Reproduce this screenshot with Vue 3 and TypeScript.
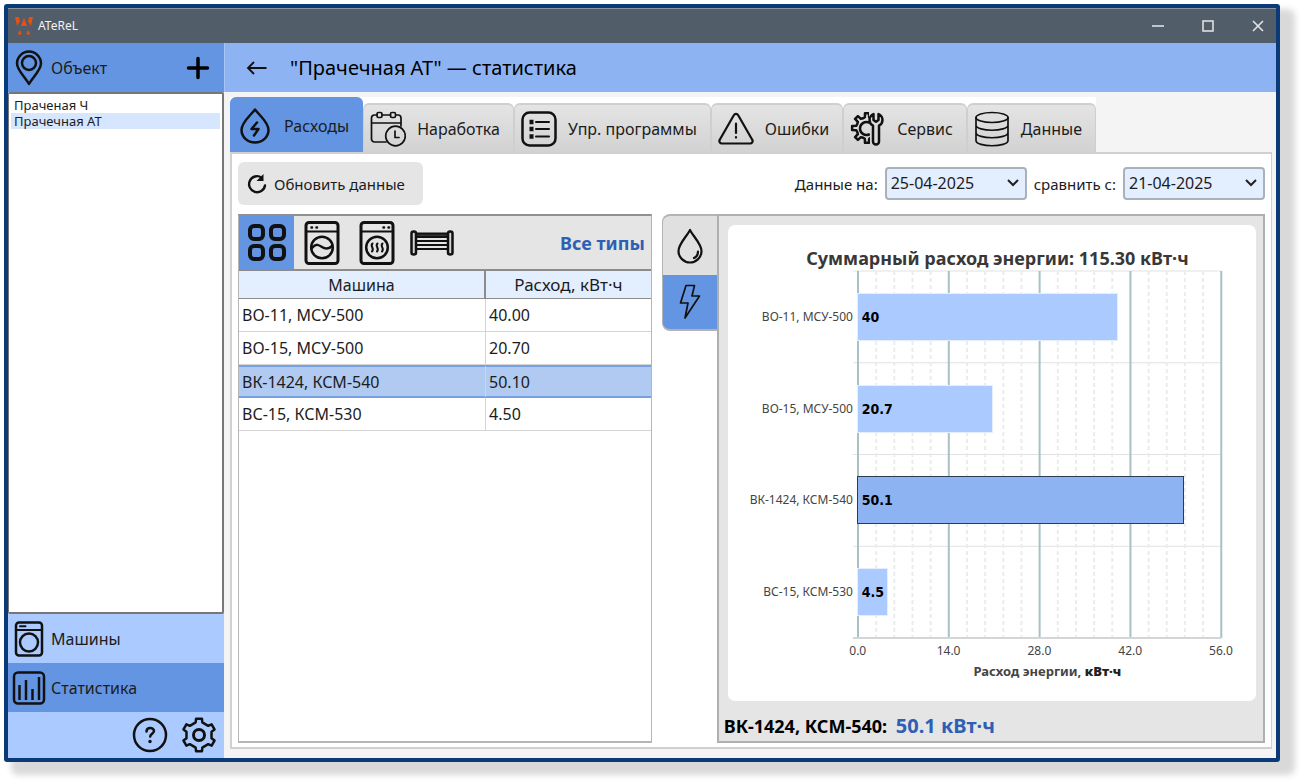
<script setup lang="ts">
import { computed, ref } from 'vue'

interface Machine {
  name: string
  value: number
}

const objects = ['Праченая Ч', 'Прачечная АТ']
const activeObject = ref(1)

const tabs = [
  { id: 'costs', label: 'Расходы' },
  { id: 'hours', label: 'Наработка' },
  { id: 'programs', label: 'Упр. программы' },
  { id: 'errors', label: 'Ошибки' },
  { id: 'service', label: 'Сервис' },
  { id: 'data', label: 'Данные' },
]
const activeTab = ref('costs')
const activeType = ref('all')
const activeResource = ref('energy')
const dateTo = ref('25-04-2025')
const dateFrom = ref('21-04-2025')

const machines: Machine[] = [
  { name: 'ВО-11, МСУ-500', value: 40 },
  { name: 'ВО-15, МСУ-500', value: 20.7 },
  { name: 'ВК-1424, КСМ-540', value: 50.1 },
  { name: 'ВС-15, КСМ-530', value: 4.5 },
]
const selected = ref(2)
const current = computed(() => machines[selected.value])
const total = computed(() => machines.reduce((sum, m) => sum + m.value, 0).toFixed(2))

const axisMax = 56
const majors = [0, 14, 28, 42, 56]
const minors = Array.from({ length: 20 }, (_, i) => i).filter((i) => i % 5 !== 0).map((i) => i * 5)
const rows = [0, 25, 50, 75]

function gearPath(teeth: number, cx: number, cy: number, outer: number, inner: number): string {
  const step = (Math.PI * 2) / teeth
  const points: string[] = []
  const add = (angle: number, r: number) =>
    points.push(`${(cx + r * Math.sin(angle)).toFixed(2)} ${(cy - r * Math.cos(angle)).toFixed(2)}`)
  for (let i = 0; i < teeth; i++) {
    const a = i * step
    add(a - step * 0.17, outer)
    add(a + step * 0.17, outer)
    add(a + step * 0.25, inner)
    add(a + step * 0.5, inner - 0.5)
    add(a + step * 0.75, inner)
  }
  return `M${points.join('L')}Z`
}
const settingsGear = gearPath(6, 18, 18, 16.5, 13)
const serviceGear = gearPath(8, 17, 17, 15, 11)
</script>

<template>
  <div class="page">
    <div class="window">
      <header class="titlebar">
        <svg class="logo" width="20" height="20" viewBox="0 0 20 20" fill="#e8500f">
          <path d="M1 1h4l1 4-3 5zM19 1h-4l-1 4 3 5zM10 1.500l3 8.500H7zM3.500 18.500L6 14l2 4.500zM16.500 18.500L14 14l-2 4.500z" />
        </svg>
        <span class="app-name">ATeReL</span>
        <div class="win-controls">
          <button type="button" aria-label="Свернуть"><svg width="14" height="14"><path d="M1 7h12" /></svg></button>
          <button type="button" aria-label="Развернуть"><svg width="14" height="14"><rect x="2" y="2" width="10" height="10" /></svg></button>
          <button type="button" aria-label="Закрыть"><svg width="14" height="14"><path d="M2 2l10 10M12 2L2 12" /></svg></button>
        </div>
      </header>

      <div class="body">
        <aside class="sidebar">
          <div class="side-head">
            <svg width="30" height="36" viewBox="0 0 30 36" class="ico">
              <path d="M15 34C11 27 3 20 3 13.500a12 12 0 0 1 24 0C27 20 19 27 15 34z" />
              <circle cx="15" cy="13" r="7" />
            </svg>
            <span>Объект</span>
            <button type="button" class="plus" aria-label="Добавить объект">
              <svg width="24" height="24" viewBox="0 0 24 24"><path d="M12 2.500v19M2.500 12h19" stroke="#000" stroke-width="3.500" stroke-linecap="round" /></svg>
            </button>
          </div>
          <ul class="objects">
            <li v-for="(o, i) in objects" :key="o">
              <button type="button" :class="{ on: i === activeObject }" @click="activeObject = i">{{ o }}</button>
            </li>
          </ul>
          <button type="button" class="side-link">
            <svg width="34" height="36" viewBox="0 0 34 36" class="ico">
              <rect x="4" y="1.500" width="26" height="33" rx="3" />
              <path d="M4 9h26" stroke-width="2" />
              <path d="M8 5.300h2M11.500 5.300h2" stroke-width="2" />
              <circle cx="17" cy="21.500" r="9" />
            </svg>
            <span>Машины</span>
          </button>
          <button type="button" class="side-link on">
            <svg width="34" height="36" viewBox="0 0 34 36" class="ico">
              <rect x="2" y="2.500" width="30" height="31" rx="4" />
              <path d="M7.500 15v15M14 10v20M20.500 19v11M27 7v23" stroke-width="2.500" stroke-linecap="butt" />
            </svg>
            <span>Статистика</span>
          </button>
          <div class="side-foot">
            <button type="button" aria-label="Справка">
              <svg width="36" height="36" viewBox="0 0 36 36" class="ico">
                <circle cx="18" cy="18" r="16" />
                <path d="M14.500 14.500c0-5 7.500-4.500 7.500-.5 0 2.500-3.800 3-3.800 5.500" stroke-width="2.500" />
                <circle cx="18" cy="24.500" r="1" fill="#111" stroke-width="1.500" />
              </svg>
            </button>
            <button type="button" aria-label="Настройки">
              <svg width="36" height="36" viewBox="0 0 36 36" class="ico">
                <path :d="settingsGear" />
                <circle cx="18" cy="18" r="5.500" stroke-width="3" />
              </svg>
            </button>
          </div>
        </aside>

        <main class="main">
          <div class="main-head">
            <button type="button" aria-label="Назад">
              <svg width="22" height="18" viewBox="0 0 22 18"><path d="M20.500 9H2M8 3L2 9l6 6" fill="none" stroke="#111" stroke-width="1.800" /></svg>
            </button>
            <h1>"Прачечная АТ" — статистика</h1>
          </div>

          <div class="content">
            <nav class="tabs" role="tablist">
              <button
                v-for="t in tabs"
                :key="t.id"
                type="button"
                role="tab"
                :aria-selected="t.id === activeTab"
                :class="['tab', { on: t.id === activeTab }]"
                @click="activeTab = t.id"
              >
                <svg v-if="t.id === 'costs'" width="36" height="36" viewBox="0 0 36 36" class="ico">
                  <path d="M18 1.500C14 7 4.500 14 4.500 22a13.500 12.500 0 0 0 27 0C31.500 14 22 7 18 1.500z" />
                  <path d="M20 14.500L14.500 21h7L17 27.500" />
                </svg>
                <svg v-else-if="t.id === 'hours'" width="36" height="36" viewBox="0 0 36 36" class="ico thin">
                  <path d="M16 31H4.500a3 3 0 0 1-3-3V7a3 3 0 0 1 3-3H7M12 4h8.500M26 4h2a3 3 0 0 1 3 3v8M1.500 12H31" />
                  <rect x="7" y="1.500" width="5" height="5" rx="1.500" />
                  <rect x="20.500" y="1.500" width="5" height="5" rx="1.500" />
                  <circle cx="25.500" cy="25" r="9.800" />
                  <path d="M25 20v6.500H29" />
                </svg>
                <svg v-else-if="t.id === 'programs'" width="36" height="36" viewBox="0 0 36 36" class="ico">
                  <rect x="1.500" y="1.500" width="33" height="33" rx="7" />
                  <path d="M15 11h13M15 18h13M15 25.500h13" stroke-width="2" />
                  <path d="M8.500 11h4M8.500 18h4M8.500 25.500h4" stroke-width="4.500" stroke-linecap="butt" />
                </svg>
                <svg v-else-if="t.id === 'errors'" width="36" height="36" viewBox="0 0 36 36" class="ico mid">
                  <path d="M15.800 4.200L1.900 28.500a2.500 2.500 0 0 0 2.200 4h27.800a2.500 2.500 0 0 0 2.200-4L20.200 4.200a2.500 2.500 0 0 0-4.400 0z" />
                  <path d="M18 12.500v9.500M18 26v.6" />
                </svg>
                <svg v-else-if="t.id === 'service'" width="36" height="36" viewBox="0 0 36 36" class="ico">
                  <clipPath id="half-gear"><path d="M0 0h19v12l1 3v19H0z" /></clipPath>
                  <g clip-path="url(#half-gear)">
                    <path :d="serviceGear" />
                    <path d="M19 11.500a6.500 6.500 0 1 0 0 12" />
                  </g>
                  <path d="M23.500 3c-3 1.500-4 3.500-4 6s1.300 4.500 3.500 5.700V30.500a3 3 0 0 0 6 0V14.700C31.200 13.500 32.500 11.500 32.500 9s-1-4.500-4-6v6L26 10.800 23.500 9z" fill="#dcdcdc" />
                </svg>
                <svg v-else width="36" height="36" viewBox="0 0 36 36" class="ico thin">
                  <ellipse cx="18" cy="6.500" rx="16" ry="5" />
                  <path d="M2 6.500v23c0 7 32 7 32 0v-23M2 14c0 7 32 7 32 0M2 21.500c0 7 32 7 32 0" />
                </svg>
                <span>{{ t.label }}</span>
              </button>
            </nav>

            <section class="pane">
              <div class="toolbar">
                <button type="button" class="refresh">
                  <svg width="22" height="22" viewBox="0 0 22 22">
                    <path d="M15.500 4.500A8 8 0 1 0 19 12.500" fill="none" stroke="#111" stroke-width="2.400" stroke-linecap="round" />
                    <path d="M17.500 1v7H10.500z" fill="#111" />
                  </svg>
                  <span>Обновить данные</span>
                </button>
                <div class="dates">
                  <label for="date-to">Данные на:</label>
                  <div class="pick">
                    <select id="date-to" v-model="dateTo"><option>25-04-2025</option><option>24-04-2025</option></select>
                    <svg width="14" height="10" viewBox="0 0 14 10"><path d="M2 2l5 5 5-5" /></svg>
                  </div>
                  <label for="date-from">сравнить с:</label>
                  <div class="pick">
                    <select id="date-from" v-model="dateFrom"><option>21-04-2025</option><option>20-04-2025</option></select>
                    <svg width="14" height="10" viewBox="0 0 14 10"><path d="M2 2l5 5 5-5" /></svg>
                  </div>
                </div>
              </div>

              <div class="split">
                <div class="left">
                  <div class="types">
                    <button type="button" aria-label="Все типы" :class="{ on: activeType === 'all' }" @click="activeType = 'all'">
                      <svg width="38" height="38" viewBox="0 0 38 38" class="ico">
                        <g stroke-width="4">
                          <rect x="2" y="2" width="13" height="13" rx="4" /><rect x="23" y="2" width="13" height="13" rx="4" />
                          <rect x="2" y="22" width="13" height="13" rx="4" /><rect x="23" y="22" width="13" height="13" rx="4" />
                        </g>
                      </svg>
                    </button>
                    <button type="button" aria-label="Стиральные" :class="{ on: activeType === 'wash' }" @click="activeType = 'wash'">
                      <svg width="36" height="44" viewBox="0 0 36 44" class="ico">
                        <rect x="2" y="1.500" width="32" height="41" rx="3" stroke-width="3" />
                        <path d="M2 10.500h32" stroke-width="2" /><path d="M7.500 6.500h.5M12.500 6.500h.5" />
                        <circle cx="18" cy="26.500" r="10.800" />
                        <path d="M8 27c4-5 7-3 10-1s6 3 10-1" />
                      </svg>
                    </button>
                    <button type="button" aria-label="Сушильные" :class="{ on: activeType === 'dry' }" @click="activeType = 'dry'">
                      <svg width="36" height="44" viewBox="0 0 36 44" class="ico">
                        <rect x="2" y="1.500" width="32" height="41" rx="3" stroke-width="3" />
                        <path d="M2 10.500h32" stroke-width="2" /><path d="M24.500 6.500h.5M29.500 6.500h.5" />
                        <circle cx="18" cy="26.500" r="10.800" />
                        <path d="M13.500 22.500c-3 3 2.500 4.500-.5 8M18.500 22.500c-3 3 2.500 4.500-.5 8M23.500 22.500c-3 3 2.500 4.500-.5 8" stroke-width="2" />
                      </svg>
                    </button>
                    <button type="button" aria-label="Гладильные" :class="{ on: activeType === 'iron' }" @click="activeType = 'iron'">
                      <svg width="44" height="26" viewBox="0 0 44 26" class="ico">
                        <rect x="6" y="3.500" width="32" height="3.500" fill="#333" stroke-width="2" />
                        <path d="M6 11h32M6 15h32M6 19h32" stroke-width="2" />
                        <rect x="1.500" y="1.500" width="4.500" height="23" rx="2" fill="#d4d4d4" />
                        <rect x="38" y="1.500" width="4.500" height="23" rx="2" fill="#d4d4d4" />
                      </svg>
                    </button>
                    <span class="type-name">Все типы</span>
                  </div>
                  <table>
                    <thead>
                      <tr><th scope="col">Машина</th><th scope="col" class="metric">Расход, кВт·ч</th></tr>
                    </thead>
                    <tbody>
                      <tr v-for="(m, i) in machines" :key="m.name" :class="{ on: i === selected }" @click="selected = i">
                        <td>{{ m.name }}</td><td>{{ m.value.toFixed(2) }}</td>
                      </tr>
                    </tbody>
                  </table>
                </div>

                <div class="right">
                  <div class="res-tabs">
                    <button type="button" aria-label="Вода" :class="{ on: activeResource === 'water' }" @click="activeResource = 'water'">
                      <svg width="28" height="36" viewBox="0 0 28 36" class="ico mid">
                        <path d="M14 2C11 8 2.500 16 2.500 23a11.500 11.500 0 0 0 23 0C25.500 16 17 8 14 2z" />
                        <path d="M22 23.500c0 3-1.500 5.500-4 6.500" />
                      </svg>
                    </button>
                    <button type="button" aria-label="Энергия" :class="{ on: activeResource === 'energy' }" @click="activeResource = 'energy'">
                      <svg width="22" height="36" viewBox="0 0 22 36" class="ico thin">
                        <path d="M7 1.500h8.500L13 12h7.500L6 34l3-15H1.500z" />
                      </svg>
                    </button>
                  </div>
                  <div class="chart-panel">
                    <div class="card">
                      <h2>Суммарный расход энергии: {{ total }} кВт·ч</h2>
                      <div class="chart">
                        <div class="names">
                          <span v-for="m in machines" :key="m.name">{{ m.name }}</span>
                        </div>
                        <div class="plot">
                          <svg class="grid" width="100%" height="100%">
                            <g stroke="#dfe2e2" stroke-width="1">
                              <line v-for="r in rows" :key="r" x1="-5" x2="100%" :y1="r + '%'" :y2="r + '%'" />
                            </g>
                            <g stroke="#ececec" stroke-width="2" stroke-dasharray="4 3">
                              <line v-for="x in minors" :key="x" :x1="x + '%'" :x2="x + '%'" y1="0" y2="100%" />
                            </g>
                            <g stroke="#a9c0c4" stroke-width="2">
                              <line v-for="v in majors" :key="v" :x1="(v / axisMax) * 100 + '%'" :x2="(v / axisMax) * 100 + '%'" y1="0" y2="100%" />
                            </g>
                            <line x1="-5" x2="100%" y1="100%" y2="100%" stroke="#d2d6d6" stroke-width="2" />
                          </svg>
                          <div v-for="(m, i) in machines" :key="m.name" class="lane">
                            <div :class="['bar', { on: i === selected }]" :style="{ width: (m.value / axisMax) * 100 + '%' }">{{ m.value }}</div>
                          </div>
                        </div>
                        <div class="ticks">
                          <span v-for="v in majors" :key="v">{{ v.toFixed(1) }}</span>
                        </div>
                        <div class="axis-title">Расход энергии, <b>кВт·ч</b></div>
                      </div>
                    </div>
                    <p class="summary">{{ current.name }}: <span>{{ current.value }} кВт·ч</span></p>
                  </div>
                </div>
              </div>
            </section>
          </div>
        </main>
      </div>
    </div>
  </div>
</template>

<style>
body {
  margin: 0;
  background: #fff;
}
</style>

<style scoped>
* {
  box-sizing: border-box;
}
.page {
  display: flex;
  min-height: 100vh;
  padding: 4px 26px 20px 4px;
  font-family: 'Noto Sans', 'Open Sans', sans-serif;
  font-size: 16px;
  line-height: 20px;
  color: #1c1c1c;
}
button {
  font: inherit;
  color: inherit;
  border: 0;
  padding: 0;
  background: none;
  display: flex;
  align-items: center;
  justify-content: center;
  cursor: pointer;
  white-space: nowrap;
}
svg {
  flex: none;
}
.ico {
  fill: none;
  stroke: #111;
  stroke-width: 2.5;
  stroke-linecap: round;
  stroke-linejoin: round;
}
.ico.mid {
  stroke-width: 2.2;
}
.ico.thin {
  stroke-width: 1.7;
}
.window {
  flex: 1;
  display: flex;
  flex-direction: column;
  border: 4px solid #0b3a78;
  border-radius: 3px;
  box-shadow: 11px 9px 6px 4px #d9d9d9;
}
.titlebar {
  display: flex;
  align-items: center;
  height: 35px;
  padding: 0 3px 0 6px;
  background: #525d6a;
  border-top: 1px solid #8d95a0;
  color: #f2f2f2;
  font-size: 12px;
}
.app-name {
  margin-left: 4px;
}
.win-controls {
  display: flex;
  margin-left: auto;
}
.win-controls button {
  width: 50px;
  height: 30px;
}
.win-controls button:last-child {
  width: 30px;
  margin-left: 10px;
}
.win-controls svg {
  fill: none;
  stroke: #e6e8ea;
  stroke-width: 1.5;
}
.body {
  flex: 1;
  display: flex;
}
.sidebar {
  flex: 0 0 216px;
  display: flex;
  flex-direction: column;
  background: #abcaff;
}
.side-head {
  display: flex;
  align-items: center;
  height: 49px;
  padding: 0 14px 0 6px;
  gap: 7px;
  background: #6495e3;
}
.plus {
  margin-left: auto;
}
.objects {
  flex: 1;
  margin: 0;
  padding: 3px 2px;
  list-style: none;
  background: #fff;
  border: 1px solid #777;
  border-width: 2px 2px 2px 1px;
  border-radius: 2px;
}
.objects button {
  width: 100%;
  height: 16px;
  padding: 0 3px;
  justify-content: flex-start;
  font-size: 13px;
  line-height: 16px;
}
.objects .on {
  background: #d6e6ff;
}
.side-link {
  height: 49px;
  padding: 0 4px;
  gap: 5px;
  justify-content: flex-start;
}
.side-link.on {
  background: #6495e3;
}
.side-foot {
  display: flex;
  justify-content: flex-end;
  align-items: center;
  gap: 13px;
  height: 46px;
  padding-right: 7px;
}
.main {
  flex: 1;
  min-width: 0;
  display: flex;
  flex-direction: column;
  background: #f4f4f4;
}
.main-head {
  display: flex;
  align-items: center;
  height: 49px;
  padding: 0 21px;
  gap: 22px;
  background: #8db3f2;
  border-left: 1px solid #a9c5f5;
}
h1 {
  margin: 0;
  font-size: 20px;
  font-weight: 400;
  line-height: 24px;
  color: #000;
}
.content {
  flex: 1;
  display: flex;
  flex-direction: column;
  padding: 5px 4px 9px 6px;
}
.tabs {
  display: flex;
  align-items: flex-end;
  align-self: flex-start;
  height: 55px;
  background: #fff;
}
.tab {
  height: 49px;
  padding: 0 13px 0 6px;
  gap: 11px;
  border: solid #cfcfcf;
  border-width: 2px 1px 0;
  border-radius: 6px 6px 0 0;
  background: linear-gradient(#e4e4e4, #d2d2d2);
}
.tab.on {
  height: 55px;
  background: #6495e3;
  border-color: #6495e3;
}
.pane {
  flex: 1;
  display: flex;
  flex-direction: column;
  gap: 9px;
  padding: 8px 6px 4px;
  background: #fff;
  border: solid #d0d0d0;
  border-width: 2px 1px 2px 2px;
}
.toolbar {
  display: flex;
  align-items: center;
  justify-content: space-between;
}
.refresh {
  height: 43px;
  padding: 0 18px 0 8px;
  gap: 6px;
  font-size: 15px;
  background: #e5e5e5;
  border-radius: 6px;
}
.dates {
  display: flex;
  align-items: center;
  gap: 7px;
  font-size: 15px;
}
.pick {
  position: relative;
}
.pick select {
  appearance: none;
  width: 142px;
  height: 33px;
  padding: 0 28px 2px 4px;
  border: 2px solid #aab1bb;
  border-radius: 4px;
  background: #e3eeff;
  font: inherit;
  font-size: 16px;
  color: inherit;
}
.pick svg {
  position: absolute;
  right: 7px;
  top: 11px;
  fill: none;
  stroke: #222;
  stroke-width: 2;
  pointer-events: none;
}
.split {
  flex: 1;
  display: flex;
  gap: 10px;
}
.left {
  flex: 43 1 0;
  min-width: 0;
  border: solid #b5b5b5;
  border-width: 2px 1px;
  border-top-color: #8f8f8f;
}
.types {
  display: flex;
  align-items: center;
  height: 53px;
  padding-right: 6px;
  background: #e5e5e5;
}
.types button {
  width: 55px;
  height: 53px;
}
.types .on {
  background: #6495e3;
}
.type-name {
  margin-left: auto;
  font-weight: 700;
  font-size: 18px;
  color: #2f5fb3;
}
table {
  width: 100%;
  border-collapse: separate;
  border-spacing: 0;
  table-layout: fixed;
}
th {
  height: 30px;
  padding: 0;
  font-weight: 400;
  background: #e3eeff;
  border: solid #8c8c8c;
  border-width: 2px 0 1px;
}
th:first-child {
  width: 60%;
  border-right-width: 2px;
}
.metric {
  font-size: 17px;
}
td {
  height: 33px;
  padding: 0 3px;
  border-bottom: 1px solid #d4d4d4;
}
td:first-child {
  border-right: 1px solid #d4d4d4;
}
tr.on td {
  background: #b0caf1;
  border-top: 2px solid #77a0e2;
  border-bottom: 2px solid #77a0e2;
}
.right {
  flex: 63 1 0;
  min-width: 0;
  display: flex;
}
.res-tabs {
  flex: 0 0 55px;
  display: flex;
  flex-direction: column;
}
.res-tabs button {
  height: 61px;
  border: 2px solid #b0b4b4;
  border-width: 2px 0 0 1px;
  border-radius: 8px 0 0 0;
  background: #e0e0e0;
}
.res-tabs button:last-child {
  height: 56px;
  border-width: 0 0 2px 1px;
  border-radius: 0 0 0 8px;
}
.res-tabs .on {
  background: #6495e3;
}
.chart-panel {
  flex: 1;
  min-width: 0;
  display: flex;
  flex-direction: column;
  padding: 9px 7px 0 9px;
  background: #e5e5e5;
  border: 2px solid #acb0b0;
}
.card {
  flex: 1;
  display: flex;
  flex-direction: column;
  padding: 20px 35px 23px 22px;
  background: #fff;
  border-radius: 7px;
}
h2 {
  margin: 0;
  padding-left: 24px;
  font-size: 18px;
  line-height: 26px;
  text-align: center;
  white-space: nowrap;
  color: #383838;
}
.chart {
  flex: 1;
  display: grid;
  grid-template-columns: 108px 1fr;
  grid-template-rows: 1fr 26px 14px;
  font-size: 12px;
  line-height: 14px;
  color: #444;
}
.names {
  display: grid;
  grid-template-rows: repeat(4, 1fr);
  align-items: center;
  justify-items: end;
  padding-right: 6px;
  white-space: nowrap;
}
.plot {
  position: relative;
  display: grid;
  grid-template-rows: repeat(4, 1fr);
  align-items: center;
}
.grid {
  position: absolute;
  inset: 0;
  overflow: visible;
}
.lane {
  position: relative;
}
.bar {
  height: 46px;
  padding-left: 4px;
  line-height: 46px;
  font-family: 'DejaVu Sans Condensed', 'DejaVu Sans', sans-serif;
  font-size: 14px;
  font-weight: 700;
  color: #000;
  background: #abcaff;
  box-shadow: 0 0 0 1px #e4eeff;
}
.bar.on {
  background: #8db3f2;
  box-shadow: 0 0 0 1px #2f3b50;
}
.ticks {
  grid-column: 2;
  display: flex;
  justify-content: space-between;
  margin: 6px -20px 0;
}
.ticks span {
  width: 40px;
  text-align: center;
}
.axis-title {
  grid-column: 2;
  text-align: center;
  font-size: 13px;
  font-weight: 700;
  padding-left: 16px;
}
.axis-title b {
  color: #222;
}
.summary {
  margin: 0 0 0 -4px;
  padding: 13px 0 3px;
  font-size: 18px;
  line-height: 24px;
  font-weight: 700;
  color: #000;
}
.summary span {
  margin-left: 4px;
  font-size: 20px;
  color: #2f5fb3;
}
</style>
